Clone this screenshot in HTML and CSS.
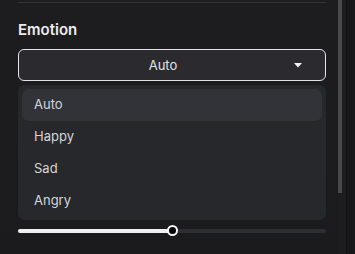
FILE: index.html
```html
<!DOCTYPE html>
<html>
<head>
<meta charset="utf-8">
<link rel="stylesheet" href="styles.css">
</head>
<body>
<div class="frame">
  <div class="panel">
    <div class="divider"></div>
    <div class="label">Emotion</div>
    <div class="select">
      <span class="select-value">Auto</span>
      <svg class="caret" width="8" height="5" viewBox="0 0 8 5"><path d="M0 0H8L4 4.5Z" fill="#f2f2f2"/></svg>
    </div>
    <ul class="menu">
      <li class="item active">Auto</li>
      <li class="item">Happy</li>
      <li class="item">Sad</li>
      <li class="item">Angry</li>
    </ul>
    <div class="slider">
      <div class="fill" style="width: 50%"></div>
      <div class="thumb" style="left: 50%"></div>
    </div>
  </div>
  <div class="scrollbar"><div class="scroll-thumb"></div></div>
  <div class="outside"></div>
</div>
</body>
</html>
```

FILE: styles.css
```css
html, body {
  margin: 0;
  padding: 0;
  background: #1c1c1f;
  font-family: "Inter", "Noto Sans", sans-serif;
}
.frame {
  display: flex;
  width: 355px;
  height: 254px;
  overflow: hidden;
}
.panel {
  width: 308px;
  padding: 0 12px 0 18px;
  background: linear-gradient(180deg, #1d1d20 0%, #1b1b1e 100%);
}
.divider {
  height: 1px;
  margin-top: 2px;
  background: #333336;
}
.label {
  margin-top: 17px;
  font-size: 15px;
  font-weight: 600;
  line-height: 20px;
  color: #ececec;
}
.select {
  position: relative;
  margin-top: 9px;
  height: 30px;
  border: 1px solid #e4e4e6;
  border-radius: 6px;
  background: #2b2b2f;
  display: flex;
  align-items: center;
}
.select-value {
  flex: 1;
  padding-right: 18px;
  text-align: center;
  font-size: 13px;
  color: #e2e2e4;
}
.caret {
  position: absolute;
  right: 23px;
  top: 13px;
}
.menu {
  list-style: none;
  margin: 4px 0 0;
  padding: 4px;
  background: #27282c;
  border-radius: 7px;
  height: 127px;
}
.item {
  height: 32px;
  line-height: 31px;
  padding-left: 12px;
  font-size: 13px;
  color: #d6d6d8;
  border-radius: 7px;
}
.item.active {
  background: #323338;
}
.slider {
  position: relative;
  margin-top: 9px;
  height: 4px;
  border-radius: 2px;
  background: #2e2f33;
}
.fill {
  height: 4px;
  border-radius: 2px;
  background: #f0f0f0;
}
.thumb {
  position: absolute;
  top: -4px;
  width: 7px;
  height: 7px;
  margin-left: -5px;
  border: 2px solid #f5f5f5;
  border-radius: 50%;
  background: #000;
}
.scrollbar {
  width: 8px;
  background: #1d1d20;
  display: flex;
}
.scroll-thumb {
  width: 4px;
  height: 193px;
  background: #4a4a4d;
}
.outside {
  flex: 1;
  border-left: 1px solid #121214;
  background: #18181a;
}
```
